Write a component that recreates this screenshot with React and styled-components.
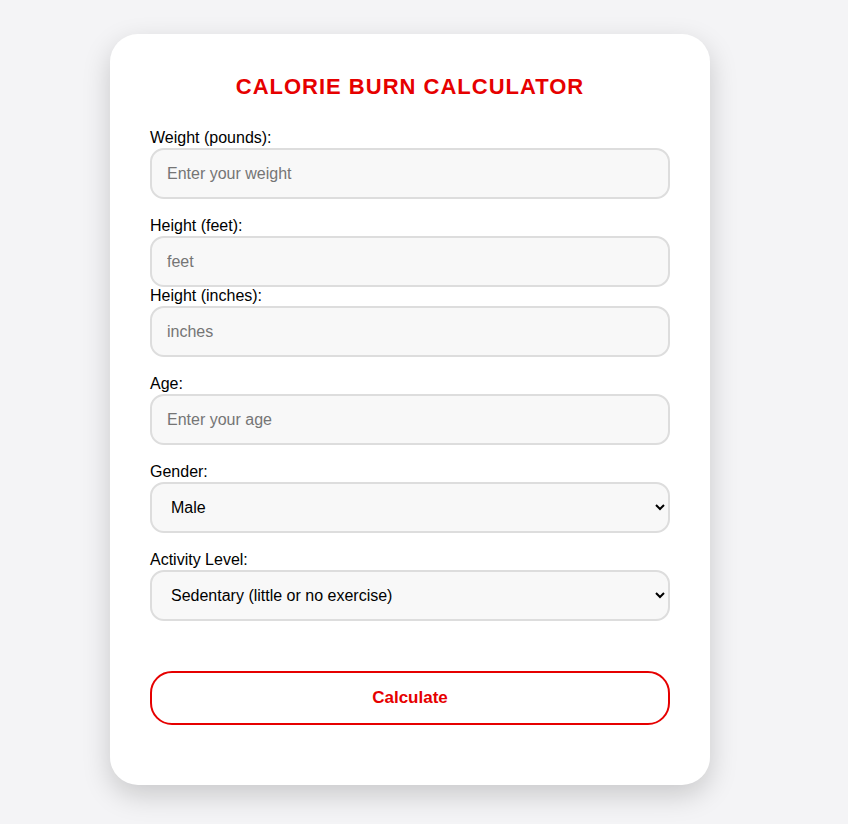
import styled, { createGlobalStyle } from 'styled-components';

const GlobalStyle = createGlobalStyle`
  * {
    box-sizing: border-box;
  }

  body {
    margin: 0;
    background: #f4f4f6;
    font-family: 'Liberation Sans', Arial, sans-serif;
  }
`;

const Page = styled.div`
  display: flex;
  justify-content: center;
  align-items: flex-start;
  padding: 34px 28px 40px 0;
  min-height: 824px;
`;

const Card = styled.div`
  width: 600px;
  background: #fff;
  border-radius: 28px;
  padding: 40px;
  box-shadow: 0 10px 28px rgba(0, 0, 0, 0.18);
`;

const Title = styled.h2`
  margin: 0 0 30px;
  text-align: center;
  color: #e60000;
  font-size: 22px;
  line-height: 25px;
  font-weight: bold;
  letter-spacing: 1px;
  text-transform: uppercase;
`;

const Group = styled.div`
  display: flex;
  flex-direction: column;
  margin-bottom: 18px;
`;

const Label = styled.label`
  display: block;
  font-size: 16px;
  line-height: 18px;
  color: #000;
  margin-bottom: 1px;
`;

const Input = styled.input`
  width: 100%;
  height: 51px;
  padding: 0 15px;
  border: 2px solid #ddd;
  border-radius: 14px;
  background: #f8f8f8;
  font-family: inherit;
  font-size: 16px;
  color: #000;
  outline: none;

  &::placeholder {
    color: #757575;
  }
`;

const Select = styled.select`
  width: 100%;
  height: 51px;
  padding: 0 15px;
  border: 2px solid #ddd;
  border-radius: 14px;
  background: #f8f8f8;
  font-family: inherit;
  font-size: 16px;
  color: #000;
  outline: none;
`;

const Button = styled.button`
  display: block;
  width: 100%;
  height: 54px;
  margin: 50px 0 20px;
  border: 2px solid #e60000;
  border-radius: 22px;
  background: #fff;
  color: #e60000;
  font-family: inherit;
  font-size: 17px;
  font-weight: bold;
  cursor: pointer;
`;

export default function App() {
  return (
    <>
      <GlobalStyle />
      <Page>
        <Card>
          <Title>Calorie Burn Calculator</Title>
          <Group>
            <Label htmlFor="weight">Weight (pounds):</Label>
            <Input id="weight" type="number" placeholder="Enter your weight" />
          </Group>
          <Group>
            <Label htmlFor="feet">Height (feet):</Label>
            <Input id="feet" type="number" placeholder="feet" />
            <Label htmlFor="inches">Height (inches):</Label>
            <Input id="inches" type="number" placeholder="inches" />
          </Group>
          <Group>
            <Label htmlFor="age">Age:</Label>
            <Input id="age" type="number" placeholder="Enter your age" />
          </Group>
          <Group>
            <Label htmlFor="gender">Gender:</Label>
            <Select id="gender" defaultValue="male">
              <option value="male">Male</option>
              <option value="female">Female</option>
            </Select>
          </Group>
          <Group>
            <Label htmlFor="activity">Activity Level:</Label>
            <Select id="activity" defaultValue="sedentary">
              <option value="sedentary">Sedentary (little or no exercise)</option>
              <option value="light">Lightly active (light exercise 1-3 days/week)</option>
              <option value="moderate">Moderately active (moderate exercise 3-5 days/week)</option>
              <option value="very">Very active (hard exercise 6-7 days/week)</option>
            </Select>
          </Group>
          <Button type="button">Calculate</Button>
        </Card>
      </Page>
    </>
  );
}
